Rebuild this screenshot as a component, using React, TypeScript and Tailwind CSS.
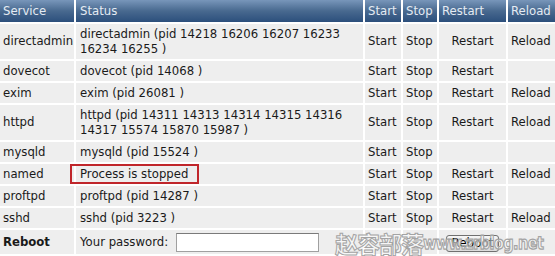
import { FunctionComponent } from 'react'

interface Service {
  name: string
  status: string
  reload: boolean
  restart: boolean
  stopped?: boolean
}

const services: Service[] = [
  {
    name: 'directadmin',
    status: 'directadmin (pid 14218 16206 16207 16233 16234 16255 )',
    restart: true,
    reload: true,
  },
  { name: 'dovecot', status: 'dovecot (pid 14068 )', restart: true, reload: false },
  { name: 'exim', status: 'exim (pid 26081 )', restart: true, reload: true },
  {
    name: 'httpd',
    status: 'httpd (pid 14311 14313 14314 14315 14316 14317 15574 15870 15987 )',
    restart: true,
    reload: true,
  },
  { name: 'mysqld', status: 'mysqld (pid 15524 )', restart: false, reload: false },
  { name: 'named', status: 'Process is stopped', restart: true, reload: true, stopped: true },
  { name: 'proftpd', status: 'proftpd (pid 14287 )', restart: true, reload: false },
  { name: 'sshd', status: 'sshd (pid 3223 )', restart: true, reload: true },
]

const th =
  'bg-gradient-to-b from-[#7896ba] via-[#48698f] to-[#2c4f7c] text-[#e4ebf3] font-normal text-left align-middle h-[22px] px-[3px] leading-[15px]'
const td = 'bg-[#eeeeee] align-middle px-[3px] py-[2.5px] leading-[15px]'

const App: FunctionComponent = () => {
  return (
    <div className="relative w-[555px] h-[256px] overflow-hidden bg-white font-['DejaVu_Sans',sans-serif] text-[11.7px] text-[#1a1a1a]">
      <table className="table-fixed border-separate border-spacing-[2px] -ml-[2px] -mt-[2px] w-[572px]">
        <colgroup>
          <col className="w-[74px]" />
          <col className="w-[287px]" />
          <col className="w-[36px]" />
          <col className="w-[34px]" />
          <col className="w-[67px]" />
          <col className="w-[60px]" />
        </colgroup>
        <thead>
          <tr>
            <th className={th}>Service</th>
            <th className={`${th} pl-[4px]`}>Status</th>
            <th className={th}>Start</th>
            <th className={th}>Stop</th>
            <th className={`${th} text-center`}>Restart</th>
            <th className={th}>Reload</th>
          </tr>
        </thead>
        <tbody>
          {services.map(s => (
            <tr key={s.name}>
              <td className={td}>{s.name}</td>
              <td className={`${td} pl-[4px] pr-[2px]`}>
                {s.stopped ? (
                  <span className="relative">
                    {s.status}
                    <span className="absolute -left-[10px] -right-[11px] -top-[3px] -bottom-[3px] border-2 border-[#c0262b]" />
                  </span>
                ) : (
                  s.status
                )}
              </td>
              <td className={td}>Start</td>
              <td className={td}>Stop</td>
              <td className={`${td} text-center`}>{s.restart ? 'Restart' : ''}</td>
              <td className={td}>{s.reload ? 'Reload' : ''}</td>
            </tr>
          ))}
          <tr>
            <td className={`${td} font-bold`}>Reboot</td>
            <td className={`${td} pl-[4px]`}>
              <div className="flex items-center gap-[8px]">
                <span>Your password:</span>
                <input
                  type="password"
                  className="w-[143px] h-[19px] bg-white border border-[#a0a0a0] border-t-[#7a7a7a] outline-none"
                />
              </div>
            </td>
            <td className={td}></td>
            <td className={td}></td>
            <td className={`${td} text-center`}>
              <button className="h-[17px] mt-[2px] px-[4px] rounded-[3px] border border-[#707070] bg-gradient-to-b from-[#f6f6f6] to-[#dcdcdc] text-[12px] leading-[14px] text-black font-['DejaVu_Sans',sans-serif]">
                Reboot
              </button>
            </td>
            <td className={td}></td>
          </tr>
        </tbody>
      </table>
      {/* watermark over the bottom-right corner */}
      <div className="absolute left-[335px] top-[231px] w-max flex items-center whitespace-nowrap pointer-events-none">
        <span className="font-['Noto_Sans_CJK_SC',sans-serif] font-bold text-[23px] leading-[24px] text-white/50 [-webkit-text-stroke:1px_#a4a4a4] tracking-[-1px]">
          赵容部落
        </span>
        <span className="font-['DejaVu_Sans',sans-serif] font-bold text-[14.5px] leading-[24px] text-white/50 [-webkit-text-stroke:1px_#a4a4a4] tracking-[-0.6px] scale-y-[1.25] inline-block">
          www.zrblog.net
        </span>
      </div>
    </div>
  )
}

export default App
